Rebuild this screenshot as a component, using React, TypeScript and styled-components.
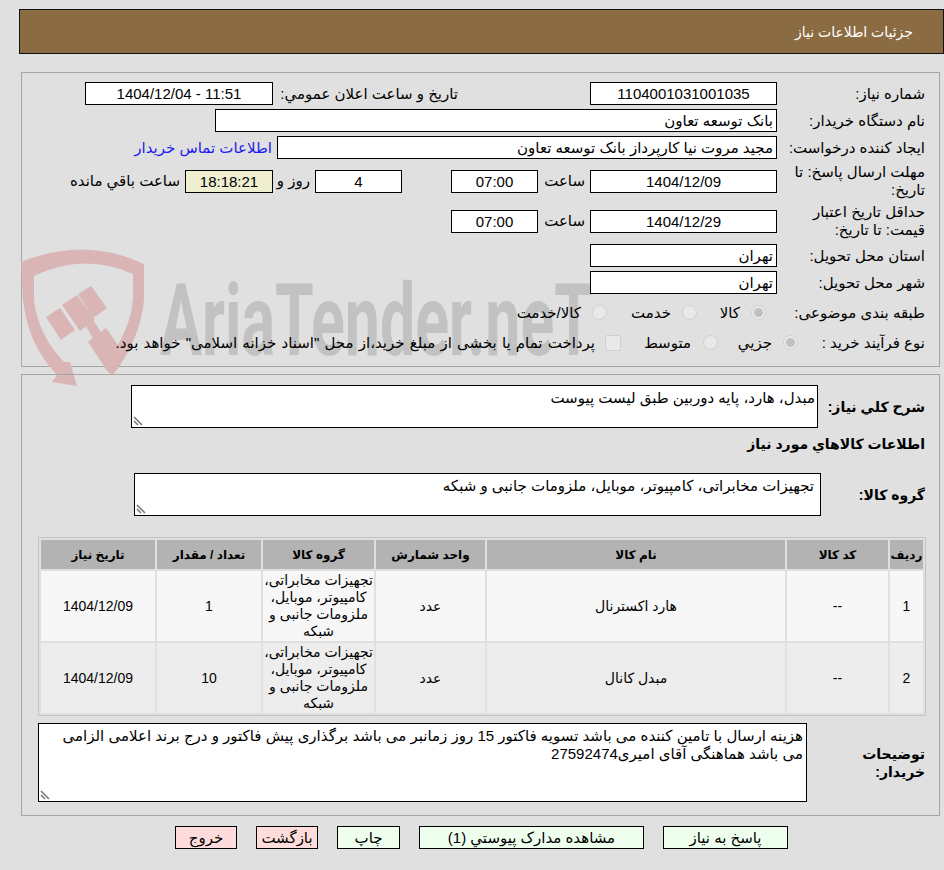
import React from "react";
import styled, { createGlobalStyle } from "styled-components";

const FONT = `"Liberation Sans", "DejaVu Sans", Tahoma, sans-serif`;

const Global = createGlobalStyle`
  html, body { margin: 0; padding: 0; background: #e0e0e0; }
  body { width: 944px; height: 870px; overflow: hidden; font-family: ${FONT}; font-size: 15px; color: #000; }
  * { box-sizing: border-box; }
`;

const Page = styled.div`
  direction: rtl;
  width: 944px;
  height: 870px;
  position: relative;
  padding: 9px 0 0 19px;
  display: flex;
  flex-direction: column;
`;

const Banner = styled.header`
  height: 45px;
  background: #8b6b41;
  border: 1px solid #111;
  color: #fff;
  display: flex;
  align-items: center;
  padding-right: 30px;
  font-size: 14px;
`;

const Panel = styled.section`
  margin: 18px 4px 0 0;
  width: 919px;
  border: 1px solid #a6a6a6;
  height: 295px;
  padding: 9px 0 0 0;
  display: flex;
  flex-direction: column;
`;

const Row = styled.div<{ $h: number; $mt?: number }>`
  height: ${(p) => p.$h}px;
  margin-top: ${(p) => p.$mt ?? 0}px;
  display: flex;
  align-items: center;
  position: relative;
  z-index: 1;
`;

const Label = styled.div<{ $w?: number }>`
  width: ${(p) => p.$w ?? 162}px;
  padding-right: 14px;
  line-height: 18px;
  flex: none;
`;

const Field = styled.div<{ $w: number; $bg?: string; $start?: boolean }>`
  width: ${(p) => p.$w}px;
  height: 23px;
  flex: none;
  background: ${(p) => p.$bg ?? "#fff"};
  border: 1px solid #000;
  display: flex;
  align-items: center;
  justify-content: ${(p) => (p.$start ? "flex-start" : "center")};
  padding: 0 3px;
  white-space: nowrap;
`;

const Cell = styled.span<{ $w?: number; $pr?: number; $ws?: number }>`
  ${(p) => (p.$w ? `width:${p.$w}px;` : "")}
  padding-right: ${(p) => p.$pr ?? 5}px;
  word-spacing: ${(p) => p.$ws ?? 0}px;
  flex: none;
  white-space: nowrap;
`;

const ContactLink = styled.a`
  color: #1c1cf0;
  margin-right: 5px;
  white-space: nowrap;
`;

const Radio = styled.span<{ $on?: boolean; $mr?: number }>`
  width: 15px;
  height: 15px;
  flex: none;
  margin-right: ${(p) => p.$mr ?? 0}px;
  border-radius: 50%;
  border: 1px solid #d0d0d0;
  background: #e9e9e9;
  display: inline-flex;
  align-items: center;
  justify-content: center;
  &::after {
    content: "";
    width: 9px;
    height: 9px;
    border-radius: 50%;
    background: ${(p) => (p.$on ? "#c0c0c0" : "transparent")};
  }
`;

const Check = styled.span`
  width: 16px;
  height: 16px;
  flex: none;
  border-radius: 2px;
  border: 1px solid #d0d0d0;
  background: #e9e9e9;
`;

const Watermark = styled.svg`
  position: absolute;
  left: 0;
  top: 0;
  width: 620px;
  height: 400px;
  direction: ltr;
`;

const Panel2 = styled.section`
  margin: 7px 4px 0 0;
  width: 919px;
  height: 442px;
  border: 1px solid #a6a6a6;
  padding: 10px 14px 0 16px;
  display: flex;
  flex-direction: column;
  position: relative;
  z-index: 1;
`;

const BoldRow = styled.div<{ $h: number; $mt?: number }>`
  display: flex;
  align-items: center;
  height: ${(p) => p.$h}px;
  margin-top: ${(p) => p.$mt ?? 0}px;
  font-weight: 700;
  font-size: 14px;
`;

const BoldLabel = styled.div<{ $w: number; $pl?: number }>`
  width: ${(p) => p.$w}px;
  padding-left: ${(p) => p.$pl ?? 0}px;
  flex: none;
  line-height: 18px;
`;

const TextBox = styled.div<{ $w: number; $h: number; $pr?: number; $pl?: number }>`
  width: ${(p) => p.$w}px;
  height: ${(p) => p.$h}px;
  flex: none;
  background: #fff;
  border: 1px solid #000;
  font-weight: 400;
  font-size: 15px;
  line-height: 18px;
  padding: 3px ${(p) => p.$pr ?? 2}px 0 ${(p) => p.$pl ?? 6}px;
  position: relative;
`;

const Grip = styled.svg`
  position: absolute;
  left: 1px;
  bottom: 1px;
  width: 11px;
  height: 11px;
`;

const Table = styled.table`
  border-collapse: separate;
  border-spacing: 2px;
  border: 1px solid #c4c4c4;
  width: 888px;
  margin: 21px -1px 0 0;
  table-layout: fixed;
  font-size: 14px;
`;

const Th = styled.th<{ $w: number }>`
  width: ${(p) => p.$w}px;
  height: 29px;
  background: #b3b3b3;
  font-size: 12px;
  font-weight: 700;
  padding: 0;
`;

const Td = styled.td<{ $alt?: boolean }>`
  background: ${(p) => (p.$alt ? "#ededed" : "#f7f7f7")};
  text-align: center;
  padding: 0;
  height: 70px;
  line-height: 17px;
`;

const Actions = styled.div`
  display: flex;
  margin: 10px 156px 0 0;
  gap: 19px;
`;

const Btn = styled.button<{ $w: number; $red?: boolean }>`
  width: ${(p) => p.$w}px;
  height: 23px;
  border: 1px solid #000;
  background: ${(p) => (p.$red ? "#ffdcdc" : "#eeffee")};
  font: 400 15px ${FONT};
  color: #000;
  padding: 0;
  white-space: nowrap;
`;

const GROUP = "تجهیزات مخابراتی، کامپیوتر، موبایل، ملزومات جانبی و شبکه";

const GripIcon = () => (
  <Grip viewBox="0 0 11 11">
    <path d="M1 2 L9 10 M1 6 L5 10" stroke="#777" strokeWidth="1.6" fill="none" />
  </Grip>
);

export default function App() {
  return (
    <Page>
      <Global />
      <Watermark viewBox="0 0 620 400">
        <g fill="#d9b5b5">
          <path d="M21 262 Q85 236 144 264 V300 Q140 340 113 375 L108 372 L88 342 L106 328 L118 345 Q132 320 133 298 V274 Q85 252 34 276 V300 Q38 335 64 362 L70 362 L77 386 L52 382 L57 375 Q28 345 23 300 Z" />
          <path d="M46 317 L60 308 L75 330 L61 340 Z" />
          <path d="M62 305 L77 295 L95 320 L80 331 Z" />
          <path d="M78 294 L91 286 L107 308 L93 318 Z" />
          <path d="M85 325 L93 320 L114 352 L106 360 Z" />
        </g>
        <text x="160" y="355" fontFamily="Roboto, sans-serif" fontWeight="700" fontSize="100" fill="#c2c2c2" textLength="433" lengthAdjust="spacingAndGlyphs">AriaTender.neT</text>
      </Watermark>
      <Banner>جزئیات اطلاعات نیاز</Banner>
      <Panel>
        <Row $h={23}>
          <Label>شماره نیاز:</Label>
          <Field $w={187}>1104001031001035</Field>
          <Cell $w={132} />
          <Cell $w={185} $pr={0}>تاریخ و ساعت اعلان عمومي:</Cell>
          <Field $w={188}>11:51 - 1404/12/04</Field>
        </Row>
        <Row $h={23} $mt={4}>
          <Label>نام دستگاه خریدار:</Label>
          <Field $w={562} $start>بانک توسعه تعاون</Field>
        </Row>
        <Row $h={23} $mt={4}>
          <Label>ایجاد کننده درخواست:</Label>
          <Field $w={500} $start>مجید مروت نیا کارپرداز بانک توسعه تعاون</Field>
          <ContactLink>اطلاعات تماس خریدار</ContactLink>
        </Row>
        <Row $h={34} $mt={5}>
          <Label>مهلت ارسال پاسخ: تا تاریخ:</Label>
          <Field $w={187}>1404/12/09</Field>
          <Cell $w={52}>ساعت</Cell>
          <Field $w={87}>07:00</Field>
          <Cell $w={49} />
          <Field $w={87}>4</Field>
          <Cell $w={42}>روز و</Cell>
          <Field $w={88} $bg="#efefd0">18:18:21</Field>
          <Cell>ساعت باقي مانده</Cell>
        </Row>
        <Row $h={34} $mt={6}>
          <Label>حداقل تاریخ اعتبار قیمت: تا تاریخ:</Label>
          <Field $w={187}>1404/12/29</Field>
          <Cell $w={52}>ساعت</Cell>
          <Field $w={87}>07:00</Field>
        </Row>
        <Row $h={23} $mt={6}>
          <Label>استان محل تحویل:</Label>
          <Field $w={187} $start>تهران</Field>
        </Row>
        <Row $h={23} $mt={4}>
          <Label>شهر محل تحویل:</Label>
          <Field $w={187} $start>تهران</Field>
        </Row>
        <Row $h={23} $mt={7}>
          <Label>طبقه بندی موضوعی:</Label>
          <Radio $on $mr={11} />
          <Cell $w={54} $pr={11}>کالا</Cell>
          <Radio />
          <Cell $w={75} $pr={11}>خدمت</Cell>
          <Radio />
          <Cell $pr={11}>کالا/خدمت</Cell>
        </Row>
        <Row $h={23} $mt={7}>
          <Label $w={141}>نوع فرآیند خرید :</Label>
          <Radio $on />
          <Cell $w={65} $pr={11}>جزيي</Cell>
          <Radio />
          <Cell $w={82} $pr={12}>متوسط</Cell>
          <Check />
          <Cell $pr={10} $ws={1}>پرداخت تمام یا بخشی از مبلغ خرید،از محل "اسناد خزانه اسلامی" خواهد بود.</Cell>
        </Row>
      </Panel>
      <Panel2>
        <BoldRow $h={43}>
          <BoldLabel $w={107}>شرح کلي نیاز:</BoldLabel>
          <TextBox $w={687} $h={43}>
            مبدل، هارد، پایه دوربین طبق لیست پیوست
            <GripIcon />
          </TextBox>
        </BoldRow>
        <BoldRow $h={18} $mt={7}>اطلاعات کالاهاي مورد نیاز</BoldRow>
        <BoldRow $h={43} $mt={20}>
          <BoldLabel $w={104}>گروه کالا:</BoldLabel>
          <TextBox $w={687} $h={43} $pr={6}>
            {GROUP}
            <GripIcon />
          </TextBox>
        </BoldRow>
        <Table>
          <thead>
            <tr>
              <Th $w={33}>ردیف</Th>
              <Th $w={101}>کد کالا</Th>
              <Th $w={298}>نام کالا</Th>
              <Th $w={109}>واحد شمارش</Th>
              <Th $w={111}>گروه کالا</Th>
              <Th $w={104}>تعداد / مقدار</Th>
              <Th $w={114}>تاریخ نیاز</Th>
            </tr>
          </thead>
          <tbody>
            <tr>
              <Td>1</Td>
              <Td>--</Td>
              <Td>هارد اکسترنال</Td>
              <Td>عدد</Td>
              <Td>{GROUP}</Td>
              <Td>1</Td>
              <Td>1404/12/09</Td>
            </tr>
            <tr>
              <Td $alt>2</Td>
              <Td $alt>--</Td>
              <Td $alt>مبدل کانال</Td>
              <Td $alt>عدد</Td>
              <Td $alt>{GROUP}</Td>
              <Td $alt>10</Td>
              <Td $alt>1404/12/09</Td>
            </tr>
          </tbody>
        </Table>
        <BoldRow $h={79} $mt={7}>
          <BoldLabel $w={118} $pl={19}>توضیحات خریدار:</BoldLabel>
          <TextBox $w={769} $h={79} $pr={3} $pl={18}>
            هزینه ارسال با تامین کننده می باشد تسویه فاکتور 15 روز زمانبر می باشد برگذاری پیش فاکتور و درج برند اعلامی الزامی می باشد هماهنگی آقای امیری27592474
            <GripIcon />
          </TextBox>
        </BoldRow>
      </Panel2>
      <Actions>
        <Btn $w={125}>پاسخ به نیاز</Btn>
        <Btn $w={225}>مشاهده مدارک پیوستي (1)</Btn>
        <Btn $w={63}>چاپ</Btn>
        <Btn $w={62} $red>بازگشت</Btn>
        <Btn $w={62} $red>خروج</Btn>
      </Actions>
    </Page>
  );
}
